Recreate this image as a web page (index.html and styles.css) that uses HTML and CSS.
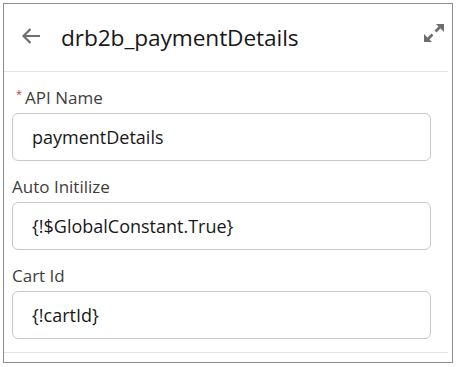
FILE: index.html
```html
<!DOCTYPE html>
<html lang="en">
<head>
    <meta charset="UTF-8">
    <meta name="viewport" content="width=device-width, initial-scale=1.0">
    <title>drb2b_paymentDetails</title>
    <link rel="stylesheet" href="styles.css">
</head>
<body>
    <div class="panel">
        <div class="panel-header">
            <button class="icon-btn back-btn" title="Back">
                <svg width="20" height="20" viewBox="0 0 20 20">
                    <path d="M19 10H2.5M9.5 3L2.5 10L9.5 17" fill="none" stroke="#706e6b" stroke-width="2.2"/>
                </svg>
            </button>
            <h2 class="panel-title">drb2b_paymentDetails</h2>
            <button class="icon-btn expand-btn" title="Expand">
                <svg width="22" height="22" viewBox="0 0 22 22">
                    <path d="M12.5 9.5L18 4" stroke="#706e6b" stroke-width="2.6"/>
                    <path d="M13 2H21V10Z" fill="#706e6b"/>
                    <path d="M9.5 12.5L4 18" stroke="#706e6b" stroke-width="2.6"/>
                    <path d="M1 12V20H9Z" fill="#706e6b"/>
                </svg>
            </button>
        </div>

        <div class="panel-body">
            <div class="field">
                <label class="field-label"><abbr class="required">*</abbr>API Name</label>
                <input class="field-input" type="text" value="paymentDetails">
            </div>
            <div class="field">
                <label class="field-label">Auto Initilize</label>
                <input class="field-input" type="text" value="{!$GlobalConstant.True}">
            </div>
            <div class="field">
                <label class="field-label">Cart Id</label>
                <input class="field-input" type="text" value="{!cartId}">
            </div>
        </div>

        <div class="panel-footer"></div>
    </div>
</body>
</html>
```

FILE: styles.css
```css
* {
    margin: 0;
    padding: 0;
    box-sizing: border-box;
}

body {
    font-family: "Open Sans", "Noto Sans", Arial, sans-serif;
    background-color: #fff;
    color: #181818;
}

.panel {
    margin: 3px;
    width: 450px;
    height: 360px;
    border: 1px solid #8c8c8c;
    display: flex;
    flex-direction: column;
}

.panel-header {
    height: 68px;
    margin-right: 4px;
    border-bottom: 1px solid #e2e2e2;
    display: flex;
    align-items: center;
    padding-left: 16px;
}

.icon-btn {
    background: none;
    border: none;
    display: flex;
    align-items: center;
    justify-content: center;
    cursor: pointer;
}

.back-btn {
    width: 22px;
    height: 22px;
    margin-top: -3px;
}

.panel-title {
    font-size: 22.7px;
    font-weight: normal;
    color: #181818;
    margin-left: 19px;
    margin-top: -1px;
    flex: 1;
    letter-spacing: -0.1px;
}

.expand-btn {
    width: 22px;
    height: 22px;
    margin-right: 3px;
    margin-top: -9px;
}

.panel-body {
    flex: 1;
    padding: 15px 0 0 8px;
    display: flex;
    flex-direction: column;
    gap: 15px;
}

.field {
    display: flex;
    flex-direction: column;
}

.field-label {
    font-size: 17px;
    line-height: 22px;
    color: #3e3e3c;
    margin-bottom: 4px;
}

.required {
    color: #c23934;
    text-decoration: none;
    font-size: 11px;
    line-height: 14px;
    margin: 0 3px 0 4px;
    vertical-align: top;
}

.field-input {
    width: 419px;
    height: 48px;
    border: 1px solid #c9c9c9;
    border-radius: 6px;
    padding: 0 19px;
    font-family: inherit;
    font-size: 18px;
    color: #181818;
    outline: none;
}

.panel-footer {
    height: 10px;
    margin-right: 4px;
    border-top: 1px solid #e2e2e2;
}
```
